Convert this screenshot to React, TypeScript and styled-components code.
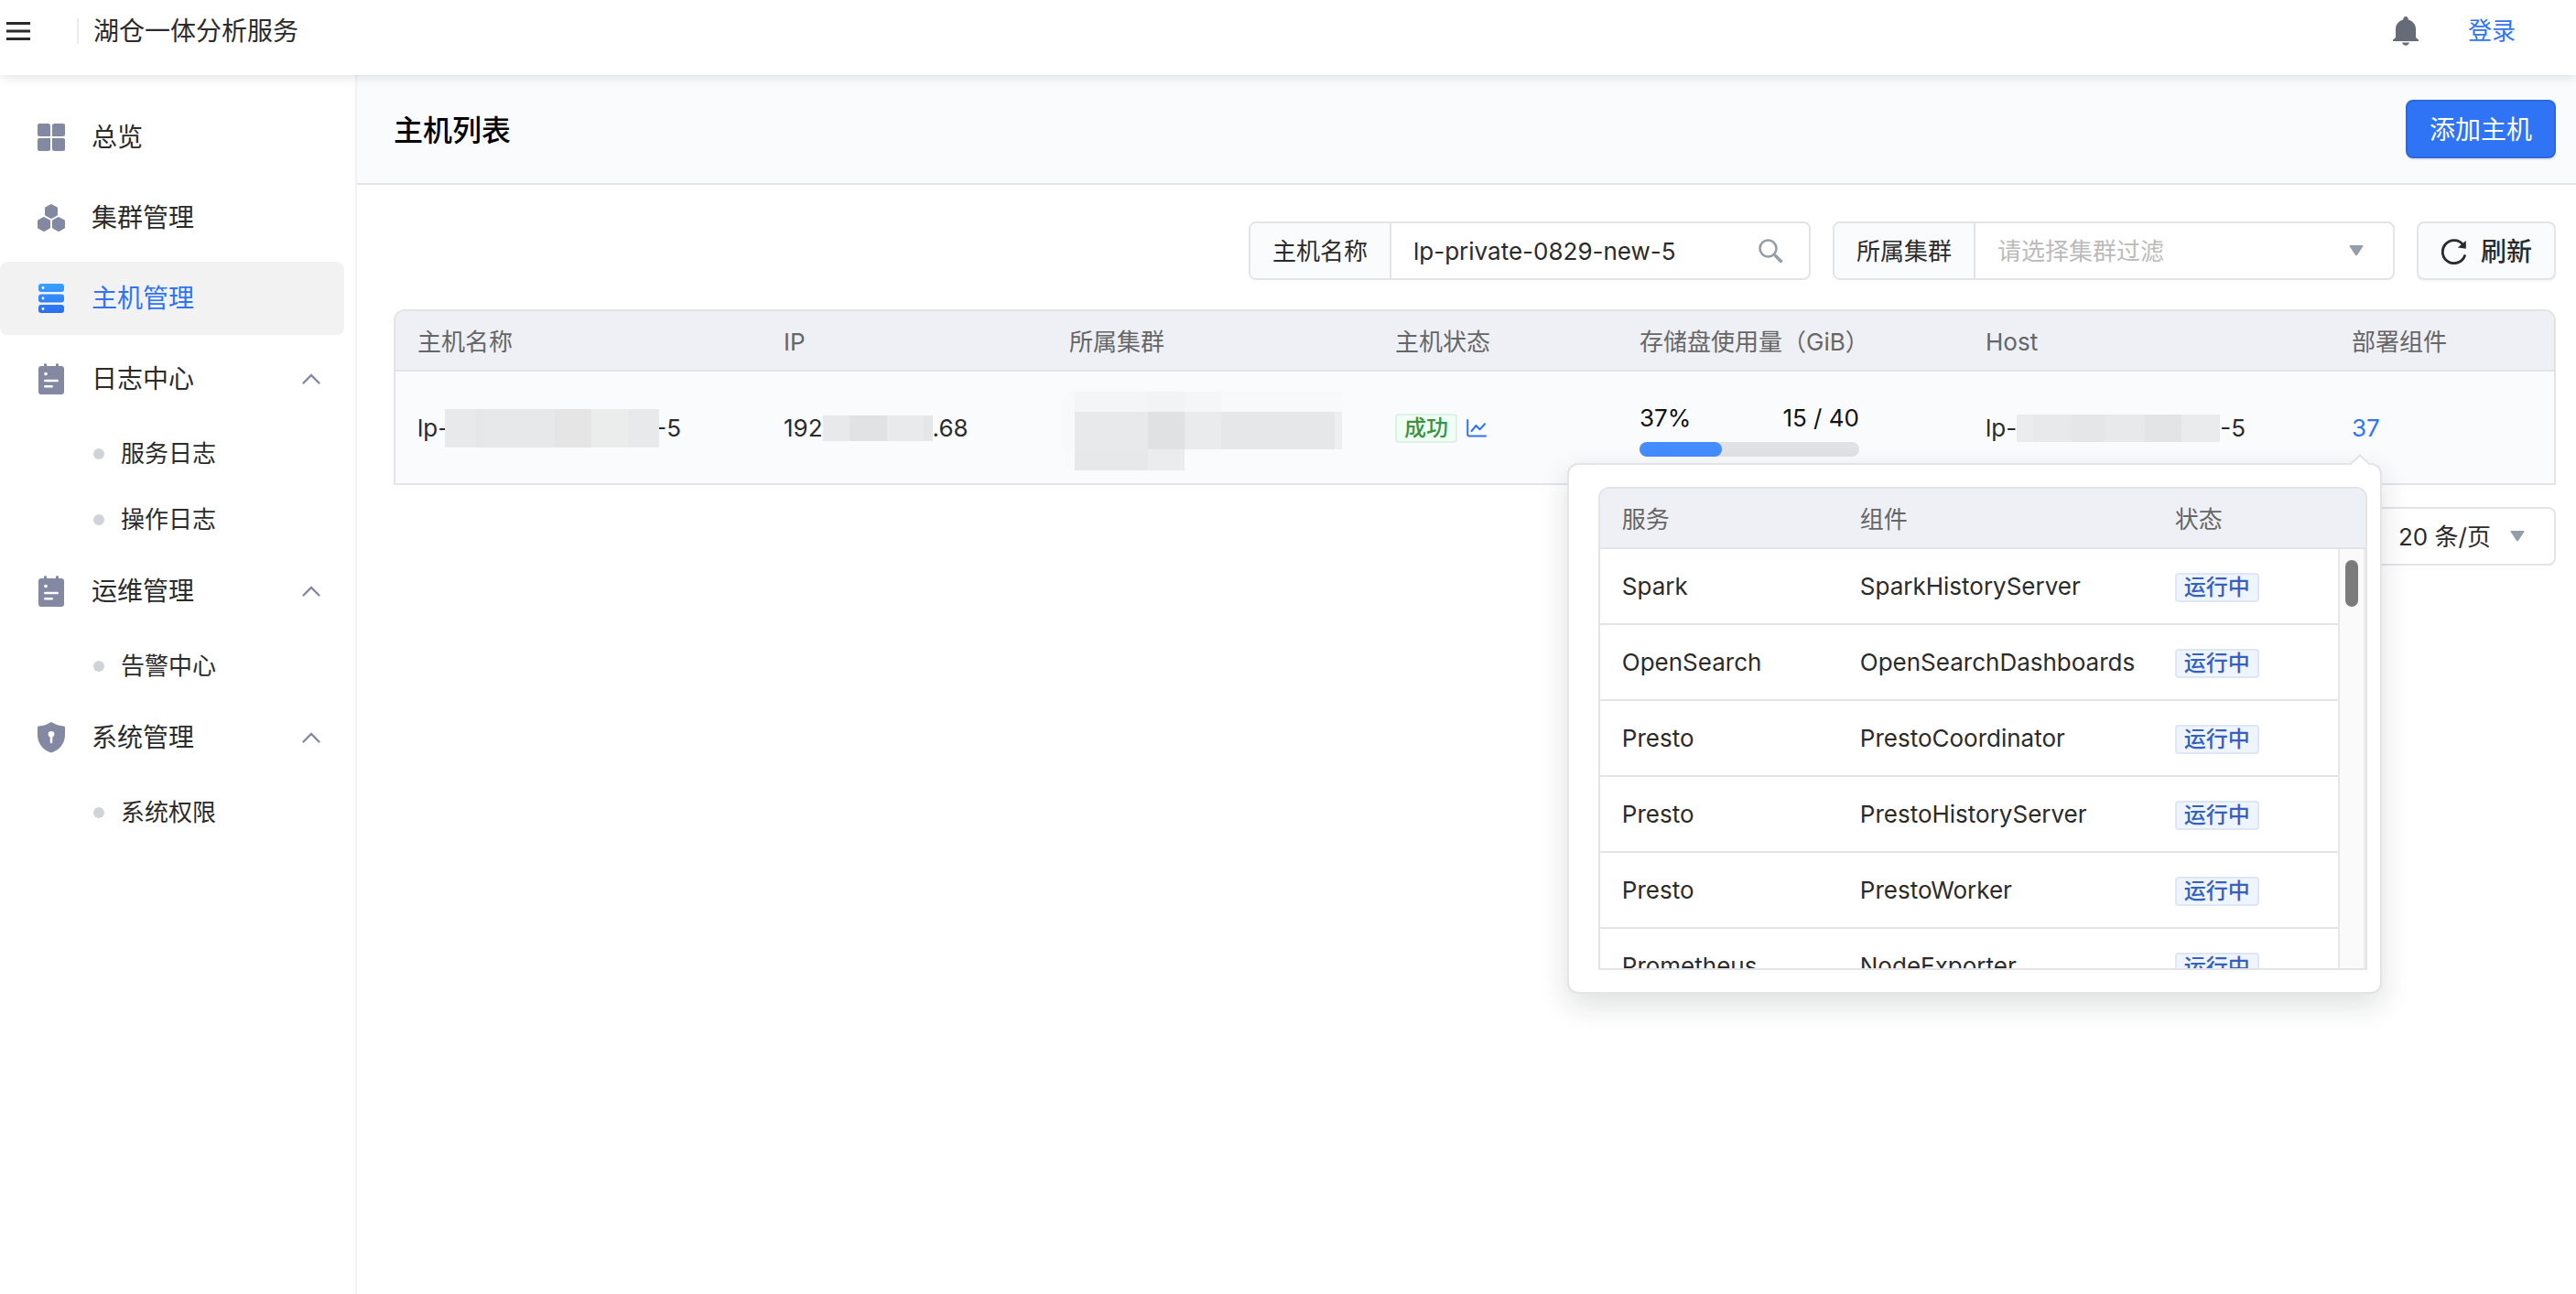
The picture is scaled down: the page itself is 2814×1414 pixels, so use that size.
import React from 'react';
import styled, { createGlobalStyle } from 'styled-components';

const color = {
  text: '#2b2b2b',
  muted: '#666666',
  primary: '#2f74f5',
  icon: '#8389a3',
  caret: '#949ea8',
  line: '#e3e4e8',
  soft: '#fafbfd',
  head: '#eff0f5',
};

const GlobalStyle = createGlobalStyle`
  *, *::before, *::after { box-sizing: border-box; }
  body {
    margin: 0;
    background: #fff;
    color: ${color.text};
    font-family: Inter, "Noto Sans CJK SC", sans-serif;
    font-size: 26px;
    line-height: 40px;
  }
  button, input, select { font: inherit; color: inherit; }
  a { text-decoration: none; }
  svg { display: block; flex: none; }
`;

const Page = styled.div`
  display: flex;
  flex-direction: column;
  min-height: 100vh;
`;

/* ---------- top bar ---------- */

const TopBar = styled.header`
  position: relative;
  z-index: 2;
  display: flex;
  align-items: center;
  height: 82px;
  padding: 0 66px 14px 7px;
  background: #fff;
  box-shadow: 0 2px 12px rgba(0, 0, 0, 0.12);
`;

const IconButton = styled.button`
  padding: 0;
  border: 0;
  background: none;
  cursor: pointer;
`;

const Product = styled.div`
  display: flex;
  align-items: center;
  gap: 16px;
  margin-left: 51px;
  font-size: 28px;

  &::before {
    content: '';
    width: 2px;
    height: 28px;
    background: #eaeaea;
  }
`;

const TopActions = styled.div`
  display: flex;
  align-items: center;
  gap: 54px;
  margin-left: auto;
`;

const Link = styled.a`
  color: ${color.primary};
`;

/* ---------- side navigation ---------- */

const Body = styled.div`
  display: flex;
  flex: 1;
`;

const Sidebar = styled.nav`
  flex: none;
  width: 390px;
  padding: 28px 12px 28px 0;
  border-right: 2px solid #f2f2f3;
`;

const NavList = styled.ul`
  margin: 0;
  padding: 0;
  list-style: none;
`;

const NavLink = styled.a<{ $active?: boolean }>`
  display: flex;
  align-items: center;
  height: 80px;
  margin-bottom: 8px;
  padding: 0 26px 0 40px;
  border-radius: 8px;
  background: ${(p) => (p.$active ? '#f2f2f2' : 'transparent')};
  color: ${(p) => (p.$active ? color.primary : color.text)};
  font-size: 28px;
`;

const NavIcon = styled.span`
  display: flex;
  justify-content: center;
  width: 32px;
  margin-right: 28px;
`;

const NavText = styled.span`
  flex: 1;
`;

const SubLink = styled.a`
  display: flex;
  align-items: center;
  gap: 18px;
  height: 68px;
  margin-bottom: 4px;
  padding-left: 102px;
  color: ${color.text};

  &::before {
    content: '';
    width: 12px;
    height: 12px;
    border-radius: 50%;
    background: #d1d3da;
  }
`;

/* ---------- main area ---------- */

const Main = styled.main`
  flex: 1;
  min-width: 0;
`;

const PageHead = styled.div`
  display: flex;
  align-items: center;
  justify-content: space-between;
  height: 120px;
  padding: 0 22px 0 40px;
  border-bottom: 2px solid ${color.line};
  background: ${color.soft};
`;

const Title = styled.h1`
  margin: 0;
  padding-top: 4px;
  color: #000;
  font-size: 32px;
  font-weight: 500;
`;

const Button = styled.button<{ $primary?: boolean }>`
  display: flex;
  align-items: center;
  gap: 14px;
  height: 64px;
  padding: 2px 24px 0;
  border: 2px solid ${(p) => (p.$primary ? '#2c68dc' : color.line)};
  border-radius: 8px;
  background: ${(p) => (p.$primary ? color.primary : color.soft)};
  box-shadow: 0 2px 0 rgba(0, 0, 0, ${(p) => (p.$primary ? 0.08 : 0.03)});
  color: ${(p) => (p.$primary ? '#fff' : color.text)};
  font-size: 28px;
  font-weight: ${(p) => (p.$primary ? 400 : 500)};
  cursor: pointer;
`;

const Content = styled.div`
  padding: 40px 22px 40px 40px;
`;

const Filters = styled.div`
  display: flex;
  justify-content: flex-end;
  gap: 24px;
  margin-bottom: 32px;
`;

const Field = styled.div`
  display: flex;
  width: 614px;
  height: 64px;
  border: 2px solid ${color.line};
  border-radius: 8px;
  background: #fff;
  overflow: hidden;
`;

const FieldLabel = styled.label`
  display: flex;
  align-items: center;
  padding: 2px 24px 0;
  border-right: 2px solid ${color.line};
  background: ${color.soft};
`;

const FieldBody = styled.div`
  display: flex;
  align-items: center;
  flex: 1;
  min-width: 0;
  padding-right: 28px;
`;

const TextInput = styled.input`
  flex: 1;
  min-width: 0;
  height: 60px;
  padding: 0 24px;
  border: 0;
  outline: 0;
  background: none;
`;

const SelectBox = styled.div`
  position: relative;
  display: flex;
  flex: 1;

  svg {
    position: absolute;
    right: 32px;
    top: 50%;
    margin-top: -6px;
    pointer-events: none;
  }
`;

const Select = styled.select<{ $empty?: boolean }>`
  flex: 1;
  height: 60px;
  padding: 2px 60px 0 24px;
  border: 0;
  outline: 0;
  background: none;
  color: ${(p) => (p.$empty ? '#bbbbbb' : color.text)};
  appearance: none;
`;

/* ---------- tables ---------- */

const TableFrame = styled.div`
  border: 2px solid ${color.line};
  border-radius: 12px 12px 0 0;
`;

const Table = styled.table`
  width: 100%;
  border-collapse: separate;
  border-spacing: 0;
  table-layout: fixed;
`;

const Th = styled.th`
  height: 66px;
  padding: 4px 24px 0;
  border-bottom: 2px solid ${color.line};
  background: ${color.head};
  color: ${color.muted};
  font-weight: 400;
  text-align: left;
  white-space: nowrap;

  &:first-child { border-top-left-radius: 10px; }
  &:last-child { border-top-right-radius: 10px; }
`;

const Td = styled.td`
  height: 122px;
  padding: 2px 24px 0;
  background: ${color.soft};
  white-space: nowrap;
`;

const Masked = styled.span`
  display: flex;
  align-items: center;
`;

const MosaicBox = styled.span<{ $width: number; $height: number; $overlap?: boolean }>`
  display: flex;
  z-index: 0;
  width: ${(p) => p.$width}px;
  height: ${(p) => p.$height}px;
  margin: 0 ${(p) => (p.$overlap ? -4 : 0)}px;
`;

const MosaicCell = styled.span<{ $size: number; $tone: string }>`
  flex: ${(p) => p.$size};
  background: ${(p) => p.$tone};
`;

const MosaicStack = styled.span`
  display: flex;
  flex-direction: column;
  width: 304px;
  margin-left: -6px;
  margin-top: 6px;
`;

const StatusLine = styled.div`
  display: flex;
  align-items: center;
  gap: 10px;
`;

const Tag = styled.span<{ $tone: 'green' | 'blue' }>`
  display: inline-block;
  height: 32px;
  padding: 0 8px;
  border: 2px solid ${(p) => (p.$tone === 'green' ? '#dff1e6' : '#dfe7f5')};
  border-radius: 4px;
  background: ${(p) => (p.$tone === 'green' ? '#effff5' : '#eff5ff')};
  color: ${(p) => (p.$tone === 'green' ? '#3b9342' : '#3560c0')};
  font-size: 24px;
  font-weight: 500;
  line-height: 28px;
  vertical-align: middle;
`;

const Usage = styled.div`
  width: 240px;
  color: #111;
`;

const UsageText = styled.div`
  display: flex;
  justify-content: space-between;
  margin-bottom: 6px;
`;

const Track = styled.div`
  height: 16px;
  border-radius: 8px;
  background: #e1e2e6;
`;

const Fill = styled.div`
  height: 16px;
  border-radius: 8px;
  background: #448dff;
`;

/* ---------- component popover ---------- */

const Anchor = styled.div`
  position: relative;
  display: inline-block;
`;

const Popover = styled.div`
  position: absolute;
  z-index: 1;
  top: calc(100% + 18px);
  right: -2px;
  width: 890px;
  padding: 24px 14px 24px 32px;
  border: 2px solid ${color.line};
  border-radius: 12px;
  background: #fff;
  box-shadow: 0 12px 32px rgba(20, 30, 30, 0.14);

  > svg {
    position: absolute;
    top: -12px;
    right: 10px;
  }
`;

const PopScroll = styled.div`
  display: flex;
  height: 458px;
  overflow: hidden;
`;

const PopBody = styled.div`
  flex: 1;
`;

const PopTd = styled.td`
  height: 83px;
  padding: 0 24px;
  border-bottom: 2px solid ${color.line};
`;

const ScrollTrack = styled.div`
  width: 30px;
  padding: 12px 6px;
  border-left: 2px solid #e8e8e8;
  border-right: 2px solid #ededed;
  background: #fafafa;
`;

const ScrollThumb = styled.div`
  width: 14px;
  height: 51px;
  border-radius: 7px;
  background: #7b7b7b;
`;

const Pager = styled.div`
  display: flex;
  justify-content: flex-end;
  margin-top: 24px;
`;

const PageSize = styled(Field)`
  width: 198px;
`;

/* ---------- icons ---------- */

const MenuIcon = () => (
  <svg width="26" height="20" viewBox="0 0 26 20" fill="#2b2b2b">
    <path d="M0 0h26v3H0zM0 8.5h26v3H0zM0 17h26v3H0z" />
  </svg>
);

const BellIcon = () => (
  <svg width="28" height="32" viewBox="0 0 28 32" fill="#656c76">
    <path d="M14 0c1.5 0 2.6 1 2.8 3.4C21.500 4.600 25 8.500 25 13.500V23l3 2.600V27H0v-1.400L3 23v-9.500C3 8.500 6.500 4.600 11.200 3.400 11.400 1 12.500 0 14 0z" />
    <path d="M10 28.600h8c-.5 2-2.200 3.200-4 3.200s-3.500-1.200-4-3.200z" />
  </svg>
);

const GridIcon = () => (
  <svg width="30" height="30" viewBox="0 0 30 30" fill={color.icon}>
    <path d="M2 0h9.500Q14 0 14 2.500V14H2Q0 14 0 12V2Q0 0 2 0z" />
    <path d="M18.500 0H28q2 0 2 2v10q0 2-2 2H16V2.500Q16 0 18.500 0z" />
    <path d="M2 16h12v11.500Q14 30 11.500 30H2Q0 30 0 28V18Q0 16 2 16z" />
    <path d="M16 16h12q2 0 2 2v10q0 2-2 2h-9.500Q16 30 16 27.500z" />
  </svg>
);

const HEX = 'M0-8 6.200-4.800Q7-4.300 7-3.500V3.500Q7 4.300 6.200 4.800L.8 7.700Q0 8.100-.8 7.700L-6.200 4.800Q-7 4.300-7 3.500V-3.500Q-7-4.300-6.200-4.800L-.8-7.700Q0-8.100.8-7.700z';

const ClusterIcon = () => (
  <svg width="30" height="30" viewBox="0 0 30 30" fill={color.icon}>
    <path transform="translate(15 8)" d={HEX} />
    <path transform="translate(7 22)" d={HEX} />
    <path transform="translate(23 22)" d={HEX} />
  </svg>
);

const HostIcon = () => (
  <svg width="28" height="32" viewBox="0 0 28 32">
    <defs>
      <linearGradient id="host" x1="0" y1="0" x2="0" y2="32" gradientUnits="userSpaceOnUse">
        <stop offset="0" stopColor="#38a2ff" />
        <stop offset="1" stopColor="#2c6cf0" />
      </linearGradient>
    </defs>
    {[0, 11.5, 23].map((y) => (
      <g key={y}>
        <rect y={y} width="28" height="9" rx="3" fill="url(#host)" />
        <circle cx="5" cy={y + 4.5} r="1.4" fill="#fff" />
      </g>
    ))}
  </svg>
);

const LogIcon = () => (
  <svg width="28" height="34" viewBox="0 0 28 34">
    <path fill={color.icon} d="M3 3h3V1.500a1.500 1.500 0 0 1 3 0V3h10V1.500a1.500 1.500 0 0 1 3 0V3h3q3 0 3 3v25q0 3-3 3H3q-3 0-3-3V6q0-3 3-3z" />
    <circle cx="8" cy="11.600" r="1.800" fill="#fff" />
    <path stroke="#fff" strokeWidth="2.400" strokeLinecap="round" d="M7.200 19h13.500M7.200 25.200h7.600" />
  </svg>
);

const ShieldIcon = () => (
  <svg width="30" height="34" viewBox="0 0 30 34">
    <path fill={color.icon} d="M15 0c4.500 2.800 9 4.200 13.500 4.500Q30 4.700 30 6v8c0 9-5.500 16.500-15 19.500C5.500 30.500 0 23 0 14V6q0-1.300 1.500-1.500C6 4.200 10.500 2.800 15 0z" />
    <circle cx="15" cy="13.300" r="3.300" fill="#fff" />
    <path stroke="#fff" strokeWidth="2.600" strokeLinecap="round" d="M15 14v8" />
  </svg>
);

const ChevronIcon = () => (
  <svg width="20" height="12" viewBox="0 0 20 12" fill="none" stroke={color.icon} strokeWidth="2.400" strokeLinecap="round">
    <path d="M1.500 10.500 10 2l8.500 8.500" />
  </svg>
);

const SearchIcon = () => (
  <svg width="27" height="27" viewBox="0 0 27 27" fill="none" stroke={color.caret}>
    <circle cx="10.500" cy="10.500" r="9" strokeWidth="2.600" />
    <path d="M17.500 17.500 25.500 25.500" strokeWidth="3.400" />
  </svg>
);

const CaretIcon = () => (
  <svg width="16" height="12" viewBox="0 0 16 12" fill={color.caret}>
    <path d="M1.500 0h13q1.500 0 .7 1.400L9 10.800q-1 1.400-2 0L.8 1.400Q0 0 1.500 0z" />
  </svg>
);

const RefreshIcon = () => (
  <svg width="30" height="28" viewBox="0 0 30 28">
    <path fill="none" stroke="#2b2b2b" strokeWidth="2.800" strokeLinecap="round" d="M26.500 18.500A12.500 12.500 0 1 1 24.500 6.300" />
    <path fill="#2b2b2b" d="M27.800 2v8.800l-9-1.200z" />
  </svg>
);

const ChartIcon = () => (
  <svg width="22" height="20" viewBox="0 0 22 20" fill="none" stroke={color.primary} strokeWidth="2" strokeLinecap="round" strokeLinejoin="round">
    <path d="M1.200 1v15.500q0 2 2 2H21" />
    <path d="M5.500 13 10.500 7l4 4.200L20 5.200" />
  </svg>
);

const ArrowShape = () => (
  <svg width="24" height="14" viewBox="0 0 24 14">
    <path fill="#fff" d="M0 14V12L12 1.500 24 12v2z" />
    <path fill="none" stroke={color.line} strokeWidth="2" d="M1 12 12 1.500 23 12" />
  </svg>
);

/* ---------- data ---------- */

type NavEntry = { text: string; icon: React.FC; active?: boolean; children?: string[] };

const NAV: NavEntry[] = [
  { text: '总览', icon: GridIcon },
  { text: '集群管理', icon: ClusterIcon },
  { text: '主机管理', icon: HostIcon, active: true },
  { text: '日志中心', icon: LogIcon, children: ['服务日志', '操作日志'] },
  { text: '运维管理', icon: LogIcon, children: ['告警中心'] },
  { text: '系统管理', icon: ShieldIcon, children: ['系统权限'] },
];

const COLUMNS: [string, number][] = [
  ['主机名称', 400],
  ['IP', 312],
  ['所属集群', 356],
  ['主机状态', 267],
  ['存储盘使用量（GiB）', 378],
  ['Host', 400],
  ['部署组件', 245],
];

const SERVICES: [string, string][] = [
  ['Spark', 'SparkHistoryServer'],
  ['OpenSearch', 'OpenSearchDashboards'],
  ['Presto', 'PrestoCoordinator'],
  ['Presto', 'PrestoHistoryServer'],
  ['Presto', 'PrestoWorker'],
  ['Prometheus', 'NodeExporter'],
];

type Cells = [number, string][];

const NAME_CELLS: Cells = [[34, '#e8e9eb'], [8, '#e6e7e8'], [78, '#e7e8e9'], [40, '#e5e5e5'], [40, '#ebecec'], [34, '#e8e9eb']];
const IP_CELLS: Cells = [[30, '#e8e9eb'], [42, '#e1e2e4'], [40, '#e9eaec'], [10, '#e5e6e8']];
const HOST_CELLS: Cells = [[18, '#ebecee'], [42, '#e8e9eb'], [36, '#e5e6e8'], [44, '#e8e9eb'], [40, '#e3e4e6'], [42, '#eaebed']];
const CLUSTER_ROWS: [number, Cells][] = [
  [22, [[12, '#f8f9fa'], [80, '#f4f5f6'], [40, '#f2f3f4'], [40, '#f5f6f7'], [132, '#f8f9fa']]],
  [41, [[12, '#f8f9fa'], [80, '#e8e9eb'], [40, '#e0e1e3'], [40, '#eaebed'], [124, '#e6e7e9'], [8, '#efeff1']]],
  [23, [[12, '#f9fafb'], [80, '#e7e8ea'], [40, '#ebecee'], [172, '#fafbfd']]],
];

type MosaicProps = { width: number; height: number; cells: Cells; overlap?: boolean };

const Mosaic = ({ width, height, cells, overlap }: MosaicProps) => (
  <MosaicBox $width={width} $height={height} $overlap={overlap} aria-hidden="true">
    {cells.map(([size, tone], i) => (
      <MosaicCell key={i} $size={size} $tone={tone} />
    ))}
  </MosaicBox>
);

const Columns = ({ widths }: { widths: number[] }) => (
  <colgroup>
    {widths.map((w, i) => (
      <col key={i} width={w} />
    ))}
  </colgroup>
);

const ComponentPopover = () => (
  <Popover role="dialog" aria-label="部署组件">
    <ArrowShape />
    <TableFrame>
      <Table>
        <Columns widths={[260, 344, 232]} />
        <thead>
          <tr>
            <Th>服务</Th>
            <Th>组件</Th>
            <Th>状态</Th>
          </tr>
        </thead>
      </Table>
      <PopScroll>
        <PopBody>
          <Table>
            <Columns widths={[260, 344, 202]} />
            <tbody>
              {SERVICES.map(([service, component]) => (
                <tr key={component}>
                  <PopTd>{service}</PopTd>
                  <PopTd>{component}</PopTd>
                  <PopTd>
                    <Tag $tone="blue">运行中</Tag>
                  </PopTd>
                </tr>
              ))}
            </tbody>
          </Table>
        </PopBody>
        <ScrollTrack>
          <ScrollThumb />
        </ScrollTrack>
      </PopScroll>
    </TableFrame>
  </Popover>
);

const HostTable = () => {
  const used = 15;
  const total = 40;
  const ratio = (used / total) * 100;
  return (
    <TableFrame>
      <Table>
        <Columns widths={COLUMNS.map(([, w]) => w)} />
        <thead>
          <tr>
            {COLUMNS.map(([name]) => (
              <Th key={name}>{name}</Th>
            ))}
          </tr>
        </thead>
        <tbody>
          <tr>
            <Td>
              <Masked>lp-<Mosaic width={234} height={42} cells={NAME_CELLS} overlap />-5</Masked>
            </Td>
            <Td>
              <Masked>192<Mosaic width={120} height={28} cells={IP_CELLS} />.68</Masked>
            </Td>
            <Td>
              <MosaicStack>
                {CLUSTER_ROWS.map(([height, cells], i) => (
                  <Mosaic key={i} width={304} height={height} cells={cells} />
                ))}
              </MosaicStack>
            </Td>
            <Td>
              <StatusLine>
                <Tag $tone="green">成功</Tag>
                <IconButton aria-label="监控"><ChartIcon /></IconButton>
              </StatusLine>
            </Td>
            <Td>
              <Usage>
                <UsageText>
                  <span>{Math.floor(ratio)}%</span>
                  <span>{used} / {total}</span>
                </UsageText>
                <Track>
                  <Fill style={{ width: `${ratio}%` }} />
                </Track>
              </Usage>
            </Td>
            <Td>
              <Masked>lp-<Mosaic width={222} height={30} cells={HOST_CELLS} />-5</Masked>
            </Td>
            <Td>
              <Anchor>
                <Link href="#components">37</Link>
                <ComponentPopover />
              </Anchor>
            </Td>
          </tr>
        </tbody>
      </Table>
    </TableFrame>
  );
};

export default function App() {
  return (
    <Page>
      <GlobalStyle />
      <TopBar>
        <IconButton aria-label="菜单"><MenuIcon /></IconButton>
        <Product>湖仓一体分析服务</Product>
        <TopActions>
          <IconButton aria-label="通知"><BellIcon /></IconButton>
          <Link href="#login">登录</Link>
        </TopActions>
      </TopBar>
      <Body>
        <Sidebar>
          <NavList>
            {NAV.map(({ text, icon: Icon, active, children }) => (
              <li key={text}>
                <NavLink href="#nav" $active={active}>
                  <NavIcon><Icon /></NavIcon>
                  <NavText>{text}</NavText>
                  {children && <ChevronIcon />}
                </NavLink>
                {children && (
                  <NavList>
                    {children.map((child) => (
                      <li key={child}>
                        <SubLink href="#nav">{child}</SubLink>
                      </li>
                    ))}
                  </NavList>
                )}
              </li>
            ))}
          </NavList>
        </Sidebar>
        <Main>
          <PageHead>
            <Title>主机列表</Title>
            <Button $primary>添加主机</Button>
          </PageHead>
          <Content>
            <Filters>
              <Field>
                <FieldLabel htmlFor="host-name">主机名称</FieldLabel>
                <FieldBody>
                  <TextInput id="host-name" defaultValue="lp-private-0829-new-5" />
                  <SearchIcon />
                </FieldBody>
              </Field>
              <Field>
                <FieldLabel htmlFor="cluster">所属集群</FieldLabel>
                <SelectBox>
                  <Select id="cluster" $empty defaultValue="">
                    <option value="">请选择集群过滤</option>
                  </Select>
                  <CaretIcon />
                </SelectBox>
              </Field>
              <Button><RefreshIcon />刷新</Button>
            </Filters>
            <HostTable />
            <Pager>
              <PageSize>
                <SelectBox>
                  <Select aria-label="每页条数" defaultValue="20">
                    <option value="20">20 条/页</option>
                  </Select>
                  <CaretIcon />
                </SelectBox>
              </PageSize>
            </Pager>
          </Content>
        </Main>
      </Body>
    </Page>
  );
}
